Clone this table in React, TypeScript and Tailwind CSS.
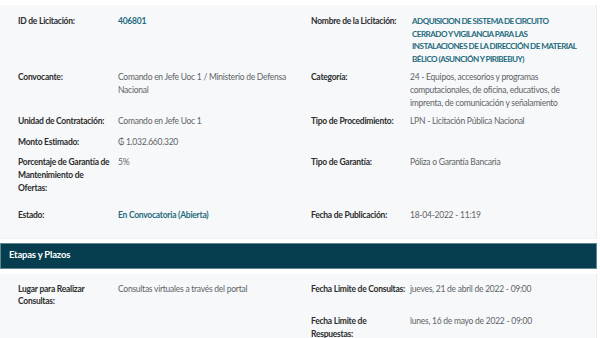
import React from 'react';

type Cell = { label: string; value: React.ReactNode; kind?: 'link' | 'title' };

const rows: { mt: string; left?: Cell; right?: Cell }[] = [
  {
    mt: 'mt-0',
    left: { label: 'ID de Licitación:', value: '406801', kind: 'link' },
    right: {
      label: 'Nombre de la Licitación:',
      value: (
        <>
          ADQUISICION DE SISTEMA DE CIRCUITO
          <br />
          CERRADO Y VIGILANCIA PARA LAS
          <br />
          INSTALACIONES DE LA DIRECCIÓN DE MATERIAL
          <br />
          BÉLICO (ASUNCIÓN Y PIRIBEBUY)
        </>
      ),
      kind: 'title',
    },
  },
  {
    mt: 'mt-[6px]',
    left: { label: 'Convocante:', value: 'Comando en Jefe Uoc 1 / Ministerio de Defensa Nacional' },
    right: {
      label: 'Categoría:',
      value: '24 - Equipos, accesorios y programas computacionales, de oficina, educativos, de imprenta, de comunicación y señalamiento',
    },
  },
  {
    mt: 'mt-[6px]',
    left: { label: 'Unidad de Contratación:', value: 'Comando en Jefe Uoc 1' },
    right: { label: 'Tipo de Procedimiento:', value: 'LPN - Licitación Pública Nacional' },
  },
  {
    mt: 'mt-[8px]',
    left: { label: 'Monto Estimado:', value: '₲ 1.032.660.320' },
  },
  {
    mt: 'mt-[8px]',
    left: { label: 'Porcentaje de Garantía de Mantenimiento de Ofertas:', value: '5%' },
    right: { label: 'Tipo de Garantía:', value: 'Póliza o Garantía Bancaria' },
  },
  {
    mt: 'mt-[15px]',
    left: { label: 'Estado:', value: 'En Convocatoria (Abierta)', kind: 'link' },
    right: { label: 'Fecha de Publicación:', value: '18-04-2022 - 11:19' },
  },
];

function Value({ cell }: { cell: Cell }) {
  if (cell.kind === 'title') {
    return (
      <div className="pl-[2px] font-bold text-[8.1px] tracking-[-0.55px] leading-[12.6px] whitespace-nowrap text-[#1f6b7e]">
        {cell.value}
      </div>
    );
  }
  if (cell.kind === 'link') {
    return <div className="font-bold text-[#1f6b7e]">{cell.value}</div>;
  }
  return <div className="text-[#5f6368]">{cell.value}</div>;
}

function Row({ left, right, mt }: { left?: Cell; right?: Cell; mt: string }) {
  return (
    <div className={`grid grid-cols-[100px_193px_99px_1fr] ${mt}`}>
      <div className="font-bold text-[#2d2d2d] pr-[6px]">{left?.label}</div>
      <div className="pr-3">{left && <Value cell={left} />}</div>
      <div className="font-bold text-[#2d2d2d] pr-[2px]">{right?.label}</div>
      <div>{right && <Value cell={right} />}</div>
    </div>
  );
}

export default function App() {
  return (
    <div className="w-[600px] h-[338px] overflow-hidden bg-white font-['Lato','Noto_Sans',sans-serif] text-[8.5px] leading-[12.6px] tracking-[-0.25px]">
      <div className="pt-[5px] w-[597px]">
        {/* General data */}
        <div className="bg-[#f6f8f9] border-r border-[#e8ecee] pt-[10px] pb-[16px] pl-[18px] pr-[10px]">
          {rows.map((r, i) => (
            <Row key={i} {...r} />
          ))}
        </div>

        <div className="h-[5px] border-t border-[#eef1f2]" />

        {/* Section header */}
        <div className="h-[26px] bg-[#073e4f] border border-[#5f8790] flex items-center pl-[8px]">
          <span className="text-white font-bold text-[9.5px] tracking-[-0.2px]">Etapas y Plazos</span>
        </div>

        <div className="h-[5px]" />

        {/* Stages */}
        <div className="bg-[#f6f8f9] border-r border-[#e8ecee] pt-[9px] pl-[18px] pr-[10px] h-[80px]">
          <Row
            mt="mt-0"
            left={{ label: 'Lugar para Realizar Consultas:', value: 'Consultas virtuales a través del portal' }}
            right={{ label: 'Fecha Limite de Consultas:', value: 'jueves, 21 de abril de 2022 - 09:00' }}
          />
          <Row
            mt="mt-[7px]"
            right={{ label: 'Fecha Limite de Respuestas:', value: 'lunes, 16 de mayo de 2022 - 09:00' }}
          />
        </div>
      </div>
    </div>
  );
}
